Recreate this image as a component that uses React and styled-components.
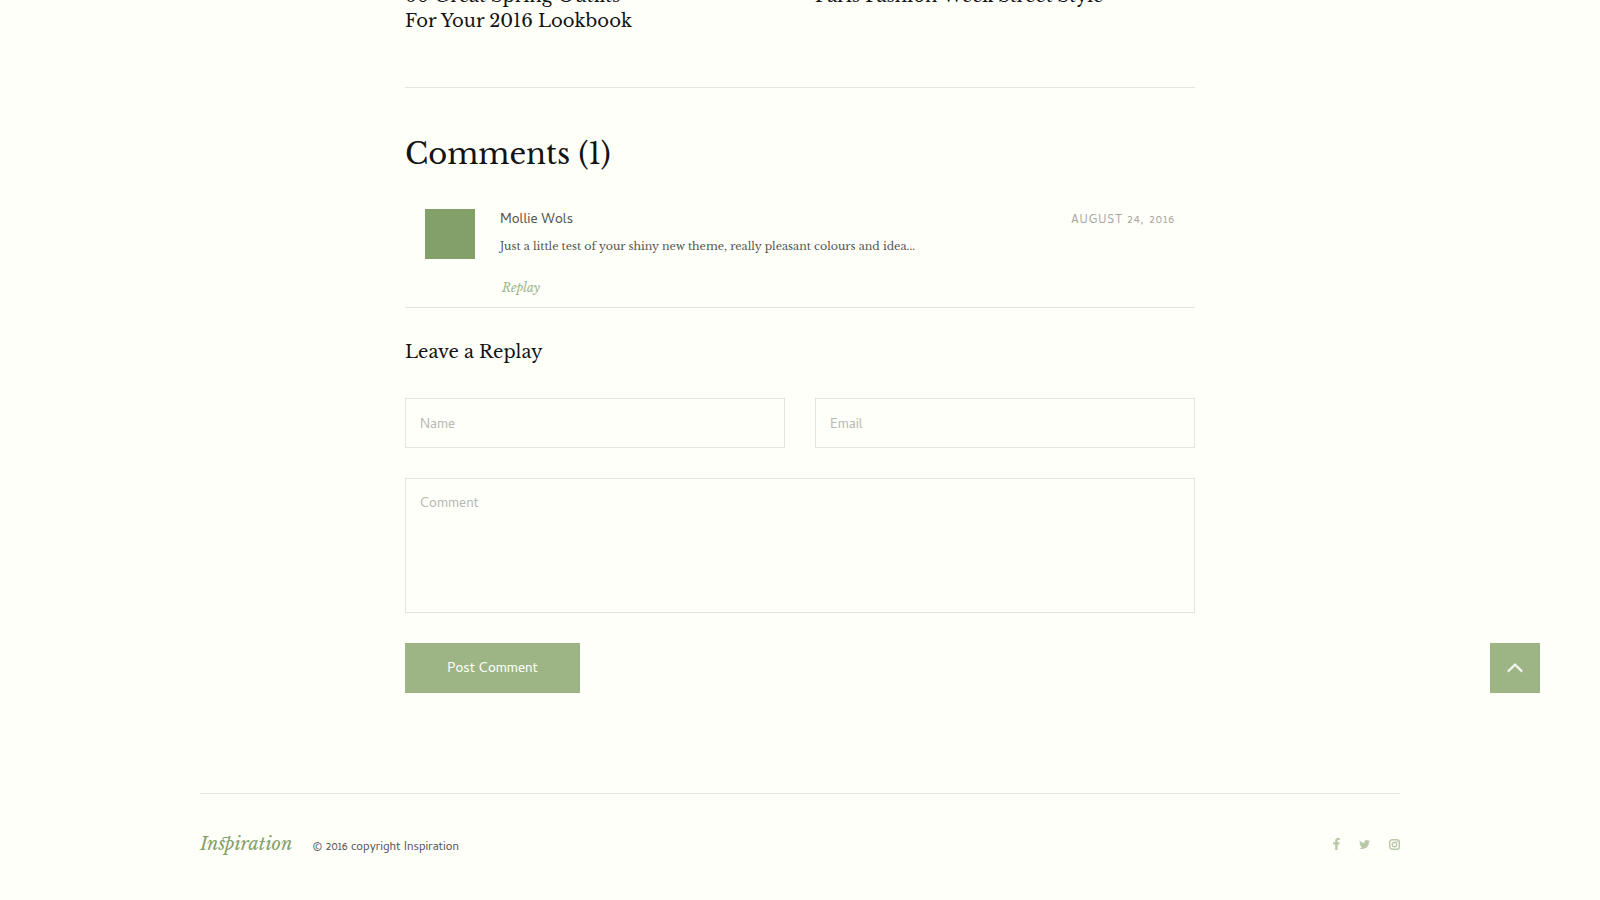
import React from "react";
import styled, { createGlobalStyle } from "styled-components";
import { FaTwitter } from "react-icons/fa";

const serif = `"Libre Baskerville", "Liberation Serif", serif`;
const sans = `"Cambay", "Noto Sans", sans-serif`;

const related = [
  { id: 1, lines: ["60 Great Spring Outfits", "For Your 2016 Lookbook"] },
  { id: 2, lines: ["Paris Fashion Week Street Style"] }
];

const comments = [
  {
    id: 1,
    author: "Mollie Wols",
    date: "August 24, 2016",
    text:
      "Just a little test of your shiny new theme, really pleasant colours and idea..."
  }
];

const FacebookIcon = () => (
  <svg width="7" height="12" viewBox="0 0 7 12" fill="currentColor" aria-hidden="true">
    <path d="M6.8 0.1V2H5.6C4.8 2 4.6 2.4 4.6 3V4.3H6.7L6.4 6.4H4.6V12H2.2V6.4H0.2V4.3H2.2V2.7C2.2 0.9 3.3 0 5 0C5.8 0 6.6 0.1 6.8 0.1Z" />
  </svg>
);

const InstagramIcon = () => (
  <svg width="11" height="11" viewBox="0 0 22 22" fill="none" aria-hidden="true">
    <rect x="1.4" y="1.4" width="19.2" height="19.2" rx="5" stroke="currentColor" strokeWidth="2.8" />
    <circle cx="11" cy="11" r="4.5" stroke="currentColor" strokeWidth="2.6" />
    <circle cx="16.7" cy="5.3" r="1.4" fill="currentColor" />
  </svg>
);

const App = () => {
  return (
    <>
      <GlobalStyle />
      <Main>
        <Related>
          {related.map(post => (
            <RelatedTitle key={post.id}>
              <a href="#post">
                {post.lines.map(line => (
                  <span key={line}>{line}</span>
                ))}
              </a>
            </RelatedTitle>
          ))}
        </Related>

        <CommentsTitle>Comments ({comments.length})</CommentsTitle>
        {comments.map(({ id, author, date, text }) => (
          <Comment key={id}>
            <Avatar />
            <CommentBody>
              <CommentHeader>
                <Author>{author}</Author>
                <CommentDate>{date}</CommentDate>
              </CommentHeader>
              <CommentText>{text}</CommentText>
              <ReplyLink href="#reply">Replay</ReplyLink>
            </CommentBody>
          </Comment>
        ))}

        <FormTitle id="reply">Leave a Replay</FormTitle>
        <Form onSubmit={e => e.preventDefault()}>
          <Field type="text" placeholder="Name" aria-label="Name" />
          <Field type="email" placeholder="Email" aria-label="Email" />
          <CommentField placeholder="Comment" aria-label="Comment" />
          <SubmitButton type="submit">Post Comment</SubmitButton>
        </Form>
      </Main>

      <Footer>
        <Logo href="#home">Inspiration</Logo>
        <Copyright>© 2016 copyright Inspiration</Copyright>
        <Social>
          <a href="#facebook" aria-label="Facebook">
            <FacebookIcon />
          </a>
          <a href="#twitter" aria-label="Twitter">
            <FaTwitter size={11} />
          </a>
          <a href="#instagram" aria-label="Instagram">
            <InstagramIcon />
          </a>
        </Social>
      </Footer>

      <ScrollTop
        type="button"
        aria-label="Back to top"
        onClick={() => window.scrollTo(0, 0)}
      >
        <svg width="16" height="10" viewBox="0 0 16 10" fill="none">
          <path d="M0.8 8.6 L8 1.6 L15.2 8.6" stroke="currentColor" strokeWidth="2.2" />
        </svg>
      </ScrollTop>
    </>
  );
};

const GlobalStyle = createGlobalStyle`
  * {
    box-sizing: border-box;
  }
  body {
    margin: 0;
    background: #fffffa;
    color: #131313;
    font-family: ${serif};
  }
  #root {
    display: flow-root;
    overflow: hidden;
  }
  h2, h3, h4, p {
    margin: 0;
    font-weight: 400;
  }
  a {
    color: inherit;
    text-decoration: none;
  }
`;

const Main = styled.main`
  max-width: 790px;
  margin: 0 auto;
`;

/* the row is tucked under the top edge of the page */
const Related = styled.section`
  display: grid;
  grid-template-columns: 1fr 1fr;
  gap: 30px;
  margin-top: -16px;
  padding-bottom: 53px;
  border-bottom: 1px solid #e4e4e0;
`;

const RelatedTitle = styled.h4`
  font-size: 18px;
  line-height: 25px;
  span {
    display: block;
  }
`;

const CommentsTitle = styled.h2`
  margin: 46px 0 35px;
  font-size: 29px;
  line-height: 40px;
`;

const Comment = styled.article`
  display: flex;
  gap: 25px;
  padding: 0 20px 9px;
  border-bottom: 1px solid #e4e4e0;
`;

const Avatar = styled.div`
  flex: none;
  width: 50px;
  height: 50px;
  background: #84a069;
`;

const CommentBody = styled.div`
  flex: 1;
`;

const CommentHeader = styled.header`
  display: flex;
  align-items: baseline;
  justify-content: space-between;
  height: 20px;
  padding-top: 2px;
  line-height: 20px;
`;

const Author = styled.span`
  font-family: ${sans};
  font-size: 14px;
  color: #555552;
`;

const CommentDate = styled.time`
  font-family: ${sans};
  font-size: 12px;
  letter-spacing: 1px;
  text-transform: uppercase;
  color: #a6a6a2;
`;

const CommentText = styled.p`
  margin: 6px 0 21px;
  font-size: 11px;
  line-height: 22px;
  color: #555552;
`;

const ReplyLink = styled.a`
  display: block;
  width: fit-content;
  padding-left: 2px;
  font-size: 12px;
  line-height: 20px;
  font-style: italic;
  color: #9db585;
`;

const FormTitle = styled.h3`
  margin: 32px 0 33px;
  font-size: 18px;
  line-height: 25px;
`;

const Form = styled.form`
  display: grid;
  grid-template-columns: 1fr 1fr;
  gap: 30px;
`;

const Field = styled.input`
  width: 100%;
  height: 50px;
  padding: 4px 14px 0;
  border: 1px solid #e4e4e0;
  border-radius: 0;
  background: transparent;
  font-family: ${sans};
  font-size: 14px;
  color: #555552;
  &::placeholder {
    color: #b9b9b5;
    opacity: 1;
  }
`;

const CommentField = styled(Field).attrs({ as: "textarea" })`
  display: block;
  grid-column: 1 / -1;
  height: 135px;
  padding: 16px 14px;
  line-height: 20px;
  resize: none;
`;

const SubmitButton = styled.button`
  width: 175px;
  height: 50px;
  padding: 3px 0 0;
  border: 0;
  background: #9db585;
  font-family: ${sans};
  font-size: 14px;
  color: #fffffa;
  cursor: pointer;
`;

const Footer = styled.footer`
  display: flex;
  align-items: baseline;
  max-width: 1200px;
  margin: 100px auto 0;
  padding: 35px 0 41px;
  border-top: 1px solid #e4e4e0;
`;

const Logo = styled.a`
  font-size: 18px;
  line-height: 30px;
  font-style: italic;
  font-variant-ligatures: common-ligatures discretionary-ligatures;
  color: #84a069;
`;

const Copyright = styled.p`
  margin-left: 20px;
  font-family: ${sans};
  font-size: 12px;
  line-height: 20px;
  color: #555552;
`;

const Social = styled.nav`
  display: flex;
  align-self: center;
  align-items: center;
  gap: 19px;
  margin-left: auto;
  color: #b9c9a8;
  a {
    display: flex;
  }
`;

const ScrollTop = styled.button`
  position: fixed;
  right: 60px;
  bottom: 207px;
  display: flex;
  align-items: center;
  justify-content: center;
  width: 50px;
  height: 50px;
  padding: 0;
  border: 0;
  background: #9db585;
  color: #f0f4ea;
  cursor: pointer;
`;

export default App;
